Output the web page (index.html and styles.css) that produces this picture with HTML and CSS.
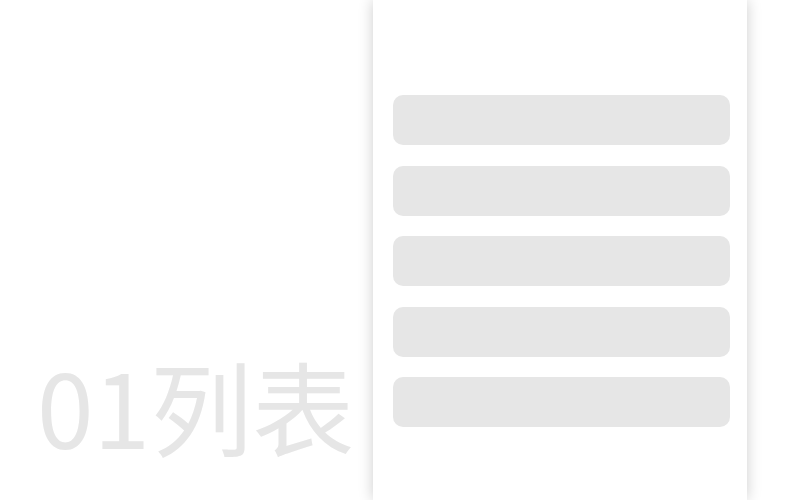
FILE: index.html
```html
<!DOCTYPE html>
<html lang="zh-CN">
<head>
  <meta charset="UTF-8" />
  <meta name="viewport" content="width=device-width, initial-scale=1.0"/>
  <title>01列表</title>
  <link rel="stylesheet" href="styles.css">
</head>
<body>
  <div class="stage">
    <!-- caption in the lower left corner -->
    <div class="caption">
      <h1 class="caption-title">01列表</h1>
    </div>

    <!-- phone-like panel with placeholder rows -->
    <div class="panel">
      <ul class="rows">
        <li class="row"></li>
        <li class="row"></li>
        <li class="row"></li>
        <li class="row"></li>
        <li class="row"></li>
      </ul>
    </div>
  </div>
</body>
</html>
```
FILE: styles.css
```css
html,
body {
  margin: 0;
  height: 100%;
  background: #fff;
  overflow: hidden;
}
.stage {
  display: flex;
  height: 500px;
  width: 800px;
}
.caption {
  width: 373px;
  display: flex;
  align-items: flex-end;
}
.caption-title {
  margin: 0 0 44px 37px;
  font-family: "Noto Sans CJK SC", "Noto Sans", sans-serif;
  font-weight: 400;
  font-size: 102px;
  line-height: 1;
  color: #e6e6e6;
  letter-spacing: 0;
}
.panel {
  width: 374px;
  height: 500px;
  background: #fff;
  box-shadow: 0 0 14px rgba(0, 0, 0, 0.2);
  box-sizing: border-box;
  padding: 95px 17px 0 20px;
}
.rows {
  list-style: none;
  margin: 0;
  padding: 0;
  display: flex;
  flex-direction: column;
  gap: 20.5px;
}
.row {
  height: 50px;
  background: #e6e6e6;
  border-radius: 10px;
}
```
